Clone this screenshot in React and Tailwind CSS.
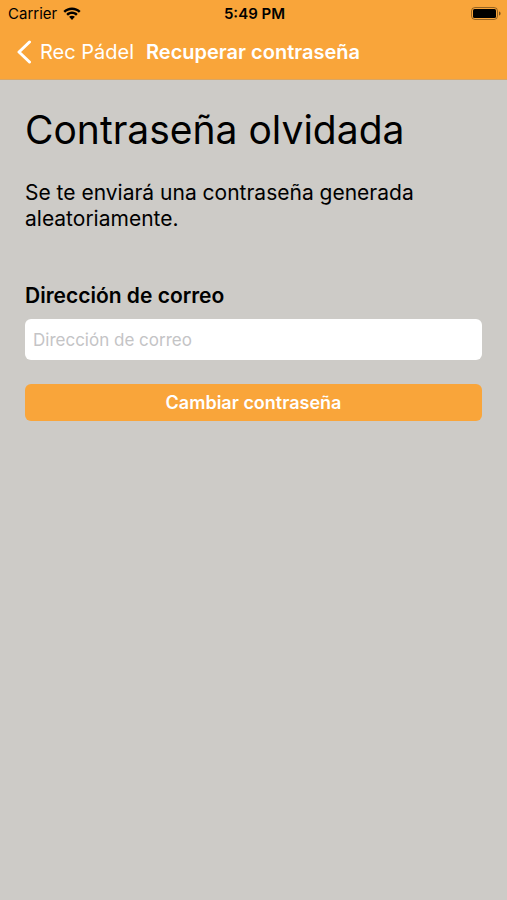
import React, { useState } from 'react';

function WifiIcon() {
  return (
    <svg width="18" height="14" viewBox="0 0 18 14" aria-hidden="true">
      <path d="M9 0.500C5.700 0.500 2.700 1.800 0.400 3.900L2.100 5.700C3.900 4 6.300 3 9 3s5.100 1 6.900 2.700l1.700-1.800C15.300 1.800 12.300 0.500 9 0.500z" />
      <path d="M9 4.600c-2.200 0-4.200 0.900-5.700 2.300L5 8.700c1-1 2.400-1.600 4-1.600s3 0.600 4 1.600l1.700-1.800C13.200 5.500 11.200 4.600 9 4.600z" />
      <path d="M9 8.700c-1.100 0-2.100 0.400-2.900 1.100L9 13l2.900-3.200C11.100 9.100 10.100 8.700 9 8.700z" />
    </svg>
  );
}

function BatteryIcon() {
  return (
    <svg width="30" height="14" viewBox="0 0 30 14" aria-hidden="true">
      <rect x="0.500" y="0.500" width="26" height="12" rx="3.500" fill="none" stroke="#000" strokeOpacity="0.4" />
      <rect x="2" y="2" width="23" height="9" rx="1.500" />
      <path d="M28 4.500c1 0.300 1.600 1.100 1.600 2s-0.600 1.700-1.600 2z" fillOpacity="0.5" />
    </svg>
  );
}

export default function App() {
  const [email, setEmail] = useState('');

  return (
    <div className="min-h-screen bg-[#cdcbc7] font-['Inter',sans-serif] text-black">
      <header className="bg-[#f9a53a] border-b border-[#d9a664]">
        <div className="grid grid-cols-3 items-center h-7 pl-2 pr-1.5 text-[15px]">
          <div className="flex items-center gap-1.5">
            <span>Carrier</span>
            <WifiIcon />
          </div>
          <span className="text-center font-semibold">5:49 PM</span>
          <div className="flex justify-end">
            <BatteryIcon />
          </div>
        </div>
        <nav className="flex items-center h-12 mb-[3px] px-4 gap-3 text-xl text-white">
          <a href="#" className="flex items-center gap-2">
            <svg width="16" height="24" viewBox="0 0 16 24" fill="none" stroke="currentColor" strokeWidth="3" strokeLinecap="round" strokeLinejoin="round" aria-hidden="true">
              <path d="M13.500 2L3 12l10.500 10" />
            </svg>
            Rec Pádel
          </a>
          <span className="font-semibold">Recuperar contraseña</span>
        </nav>
      </header>

      <main className="px-[25px] pt-6">
        <h1 className="text-[39px] leading-[52px]">Contraseña olvidada</h1>
        <p className="mt-6 text-[21px] leading-[26px]">Se te enviará una contraseña generada aleatoriamente.</p>
        <form onSubmit={(e) => e.preventDefault()} className="mt-[50px] flex flex-col">
          <label htmlFor="email" className="text-[21px] leading-7 font-semibold">Dirección de correo</label>
          <input
            id="email"
            type="email"
            value={email}
            onChange={(e) => setEmail(e.target.value)}
            placeholder="Dirección de correo"
            className="mt-[9px] h-[41px] px-2 rounded-md bg-white text-[17px] placeholder:text-[#c4c4c6] outline-none"
          />
          <button type="submit" className="mt-6 h-[37px] rounded-md bg-[#f9a53a] text-lg font-semibold text-white">
            Cambiar contraseña
          </button>
        </form>
      </main>
    </div>
  );
}
